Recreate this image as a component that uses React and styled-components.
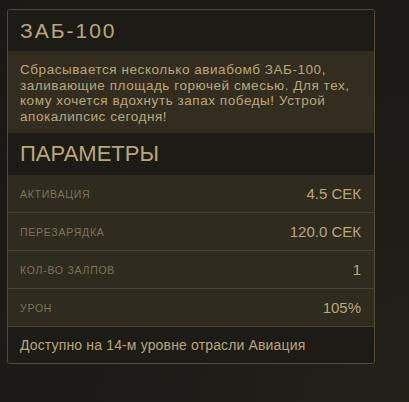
import React from 'react'
import styled, { createGlobalStyle } from 'styled-components'

const GlobalStyle = createGlobalStyle`
  html, body {
    margin: 0;
    padding: 0;
    background: #1b1a16;
  }
  body {
    font-family: 'Liberation Sans', Arial, sans-serif;
  }
`

const Page = styled.div`
  width: 409px;
  height: 402px;
  box-sizing: border-box;
  padding: 9px 0 0 7px;
  background: radial-gradient(ellipse at 100% 100%, #24211b 0%, #1c1a16 55%, #1a1915 100%);
`

const Panel = styled.div`
  width: 368px;
  box-sizing: border-box;
  border: 1px solid #554b35;
  border-radius: 3px;
  overflow: hidden;
  background: #1d1b16;
  color: #b9a77c;
`

const Heading = styled.div`
  display: flex;
  align-items: center;
  height: ${props => props.$height}px;
  padding: 0 12px;
  background: #1d1b16;
  font-size: ${props => props.$size}px;
  letter-spacing: ${props => props.$spacing}px;
  color: #b9a77c;
`

const Description = styled.div`
  padding: 11px 12px 9px;
  background: #332d20;
  font-size: 13.5px;
  letter-spacing: 0.55px;
  line-height: 15.5px;
`

const StatRow = styled.div`
  display: flex;
  align-items: center;
  justify-content: space-between;
  height: 37px;
  padding: 0 13px 0 12px;
  background: #302b1f;
  border-bottom: 1px solid #4a4330;
`

const StatLabel = styled.span`
  font-size: 10.5px;
  letter-spacing: 0.75px;
  color: #7e7458;
  text-transform: uppercase;
`

const StatValue = styled.span`
  font-size: 15px;
  color: #b9a77c;
`

const Footer = styled.div`
  display: flex;
  align-items: center;
  height: 36px;
  padding: 0 12px;
  font-size: 14px;
  letter-spacing: 0.15px;
  background: #1d1b16;
`

const stats = [
  { label: 'Активация', value: '4.5 СЕК' },
  { label: 'Перезарядка', value: '120.0 СЕК' },
  { label: 'Кол-во залпов', value: '1' },
  { label: 'Урон', value: '105%' }
]

const App = () => (
  <Page>
    <GlobalStyle />
    <Panel>
      <Heading $height={41} $size={21} $spacing={2}>ЗАБ-100</Heading>
      <Description>
        Сбрасывается несколько авиабомб ЗАБ-100, заливающие площадь горючей смесью. Для тех, кому
        хочется вдохнуть запах победы! Устрой апокалипсис сегодня!
      </Description>
      <Heading $height={42} $size={22} $spacing={0}>ПАРАМЕТРЫ</Heading>
      {stats.map(stat => (
        <StatRow key={stat.label}>
          <StatLabel>{stat.label}</StatLabel>
          <StatValue>{stat.value}</StatValue>
        </StatRow>
      ))}
      <Footer>Доступно на 14-м уровне отрасли Авиация</Footer>
    </Panel>
  </Page>
)

export default App
